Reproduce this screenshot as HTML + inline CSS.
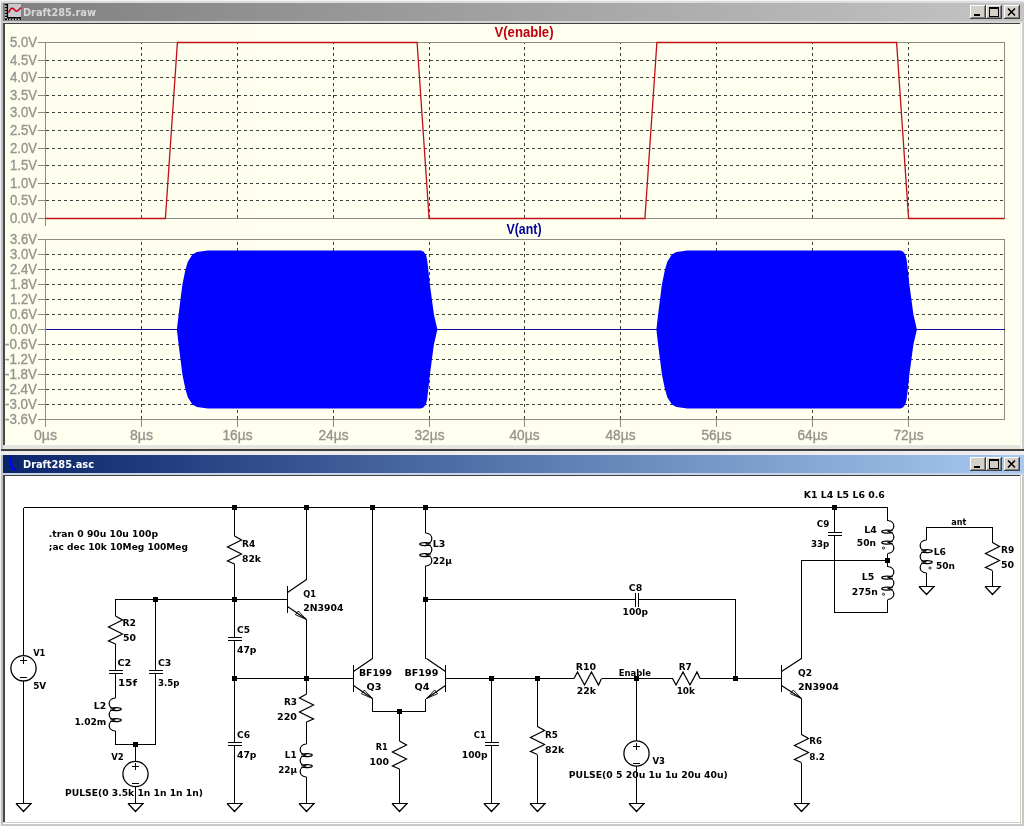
<!DOCTYPE html>
<html lang="en"><head><meta charset="utf-8"><title>Draft285</title>
<style>html,body{margin:0;padding:0;background:#d8d8d4;overflow:hidden}svg{display:block;will-change:transform;opacity:0.999}text{white-space:pre}</style></head>
<body>
<svg width="1024" height="826" viewBox="0 0 1024 826">
<defs>
<linearGradient id="g1" x1="0" x2="1" y1="0" y2="0"><stop offset="0" stop-color="#808080"/><stop offset="1" stop-color="#c4c4c4"/></linearGradient>
<linearGradient id="g2" x1="0" x2="1" y1="0" y2="0"><stop offset="0" stop-color="#0a246a"/><stop offset="1" stop-color="#a6caf0"/></linearGradient>
</defs>
<g shape-rendering="crispEdges">
<rect x="0" y="0" width="1024" height="826" fill="#d8d8d4"/>
<rect x="0" y="0" width="1024" height="1" fill="#f4f4f4"/>
<rect x="0" y="1" width="1024" height="2" fill="#dcdcdc"/>
<rect x="3" y="3" width="1021" height="18" fill="url(#g1)"/>
<rect x="3" y="21" width="1021" height="2" fill="#d4d4d0"/>
<rect x="3" y="23" width="1017" height="1" fill="#404040"/>
<rect x="3" y="23" width="2" height="422" fill="#484848"/>
<rect x="5" y="24" width="1015" height="421" fill="#fffff0"/>
<rect x="3" y="445" width="1018" height="4" fill="#e6e6e0"/>
<rect x="1020" y="23" width="1" height="423" fill="#f0f0f0"/>
<rect x="0" y="449" width="1024" height="2" fill="#404040"/>
<rect x="0" y="451" width="1024" height="4" fill="#ececec"/>
<rect x="3" y="455" width="1021" height="18" fill="url(#g2)"/>
<rect x="3" y="473" width="1021" height="2" fill="#c8d4e8"/>
<rect x="3" y="475" width="1017" height="1" fill="#404040"/>
<rect x="3" y="475" width="2" height="347" fill="#484848"/>
<rect x="5" y="476" width="1014" height="346" fill="#ffffff"/>
<rect x="1019" y="476" width="1" height="346" fill="#ffffff"/>
<rect x="3" y="822" width="1018" height="1" fill="#d0d0c8"/>
<rect x="3" y="823" width="1019" height="1" fill="#ffffff"/>
<rect x="0" y="824" width="1024" height="2" fill="#c8c8c4"/>
<rect x="0" y="0" width="1" height="826" fill="#f0f0f0"/>
<rect x="1" y="3" width="2" height="446" fill="#c0c0c0"/>
<rect x="1" y="455" width="2" height="369" fill="#c0c0c0"/>
<rect x="1021" y="23" width="1" height="426" fill="#ffffff"/>
<rect x="1022" y="23" width="2" height="426" fill="#ccccc4"/>
<rect x="1020" y="475" width="1" height="349" fill="#d0d0c8"/>
<rect x="1021" y="475" width="1" height="349" fill="#ffffff"/>
<rect x="1022" y="475" width="2" height="349" fill="#c8c8c0"/>
<rect x="970" y="5" width="16" height="14" fill="#404040"/>
<rect x="970" y="5" width="15" height="13" fill="#ffffff"/>
<rect x="971" y="6" width="14" height="12" fill="#808080"/>
<rect x="971" y="6" width="13" height="11" fill="#d4d0c8"/>
<rect x="986" y="5" width="16" height="14" fill="#404040"/>
<rect x="986" y="5" width="15" height="13" fill="#ffffff"/>
<rect x="987" y="6" width="14" height="12" fill="#808080"/>
<rect x="987" y="6" width="13" height="11" fill="#d4d0c8"/>
<rect x="1004" y="5" width="16" height="14" fill="#404040"/>
<rect x="1004" y="5" width="15" height="13" fill="#ffffff"/>
<rect x="1005" y="6" width="14" height="12" fill="#808080"/>
<rect x="1005" y="6" width="13" height="11" fill="#d4d0c8"/>
<rect x="974" y="14" width="6" height="2" fill="#000"/>
<rect x="989" y="7" width="9" height="9" fill="none" stroke="#000" stroke-width="1" transform="translate(0.5,0.5)"/>
<rect x="989" y="7" width="10" height="2" fill="#000"/>
</g>
<path d="M1008 8.5 L1015 15.5 M1015 8.5 L1008 15.5" stroke="#000" stroke-width="1.6" fill="none"/>
<g shape-rendering="crispEdges">
<rect x="970" y="457" width="16" height="14" fill="#404040"/>
<rect x="970" y="457" width="15" height="13" fill="#ffffff"/>
<rect x="971" y="458" width="14" height="12" fill="#808080"/>
<rect x="971" y="458" width="13" height="11" fill="#d4d0c8"/>
<rect x="986" y="457" width="16" height="14" fill="#404040"/>
<rect x="986" y="457" width="15" height="13" fill="#ffffff"/>
<rect x="987" y="458" width="14" height="12" fill="#808080"/>
<rect x="987" y="458" width="13" height="11" fill="#d4d0c8"/>
<rect x="1004" y="457" width="16" height="14" fill="#404040"/>
<rect x="1004" y="457" width="15" height="13" fill="#ffffff"/>
<rect x="1005" y="458" width="14" height="12" fill="#808080"/>
<rect x="1005" y="458" width="13" height="11" fill="#d4d0c8"/>
<rect x="974" y="466" width="6" height="2" fill="#000"/>
<rect x="989" y="459" width="9" height="9" fill="none" stroke="#000" stroke-width="1" transform="translate(0.5,0.5)"/>
<rect x="989" y="459" width="10" height="2" fill="#000"/>
</g>
<path d="M1008 460.5 L1015 467.5 M1015 460.5 L1008 467.5" stroke="#000" stroke-width="1.6" fill="none"/>
<g shape-rendering="crispEdges">
</g>
<g>
<rect x="8" y="4" width="13" height="13" fill="#c8c8d0"/>
<rect x="5" y="4" width="2" height="16" fill="#e8e8e8"/>
<rect x="5" y="18.5" width="16" height="1.5" fill="#e8e8e8"/>
<rect x="5" y="4.0" width="2" height="1.4" fill="#000"/>
<rect x="5" y="6.9" width="2" height="1.4" fill="#000"/>
<rect x="5" y="9.8" width="2" height="1.4" fill="#000"/>
<rect x="5" y="12.7" width="2" height="1.4" fill="#000"/>
<rect x="5" y="15.6" width="2" height="1.4" fill="#000"/>
<rect x="5" y="18.5" width="2" height="1.4" fill="#000"/>
<rect x="5.0" y="18.5" width="1.4" height="1.5" fill="#000"/>
<rect x="7.9" y="18.5" width="1.4" height="1.5" fill="#000"/>
<rect x="10.8" y="18.5" width="1.4" height="1.5" fill="#000"/>
<rect x="13.7" y="18.5" width="1.4" height="1.5" fill="#000"/>
<rect x="16.6" y="18.5" width="1.4" height="1.5" fill="#000"/>
<rect x="19.5" y="18.5" width="1.4" height="1.5" fill="#000"/>
<path d="M7.4 4V17.8H21" stroke="#000" stroke-width="1.4" fill="none"/>
<path d="M8.5 12.5L11.3 8.2L13.3 8.4L15.8 11L17.6 11L21 7.4" stroke="#d00018" stroke-width="1.5" fill="none"/>
</g>
<path d="M10.5 457.5L11.3 466L12.5 468.5L16 470" stroke="#0000ff" stroke-width="2.2" fill="none"/>
<text x="23" y="16" style="font-family:'DejaVu Sans Condensed','DejaVu Sans','Liberation Sans',sans-serif;font-weight:bold;font-size:11px" fill="#d8d8d8" textLength="73" lengthAdjust="spacingAndGlyphs">Draft285.raw</text>
<text x="23" y="468" style="font-family:'DejaVu Sans Condensed','DejaVu Sans','Liberation Sans',sans-serif;font-weight:bold;font-size:11px" fill="#ffffff" textLength="71" lengthAdjust="spacingAndGlyphs">Draft285.asc</text>
<g shape-rendering="crispEdges" fill="none">
<path d="M46 60.5H1004" stroke="#404040" stroke-dasharray="3 3"/>
<path d="M46 77.5H1004" stroke="#404040" stroke-dasharray="3 3"/>
<path d="M46 95.5H1004" stroke="#404040" stroke-dasharray="3 3"/>
<path d="M46 112.5H1004" stroke="#404040" stroke-dasharray="3 3"/>
<path d="M46 130.5H1004" stroke="#404040" stroke-dasharray="3 3"/>
<path d="M46 148.5H1004" stroke="#404040" stroke-dasharray="3 3"/>
<path d="M46 165.5H1004" stroke="#404040" stroke-dasharray="3 3"/>
<path d="M46 183.5H1004" stroke="#404040" stroke-dasharray="3 3"/>
<path d="M46 200.5H1004" stroke="#404040" stroke-dasharray="3 3"/>
<path d="M141.5 218V43" stroke="#404040" stroke-dasharray="3 3"/>
<path d="M237.5 218V43" stroke="#404040" stroke-dasharray="3 3"/>
<path d="M333.5 218V43" stroke="#404040" stroke-dasharray="3 3"/>
<path d="M429.5 218V43" stroke="#404040" stroke-dasharray="3 3"/>
<path d="M524.5 218V43" stroke="#404040" stroke-dasharray="3 3"/>
<path d="M620.5 218V43" stroke="#404040" stroke-dasharray="3 3"/>
<path d="M716.5 218V43" stroke="#404040" stroke-dasharray="3 3"/>
<path d="M812.5 218V43" stroke="#404040" stroke-dasharray="3 3"/>
<path d="M908.5 218V43" stroke="#404040" stroke-dasharray="3 3"/>
<path d="M38 42.5H1004.5V218.5H38" stroke="#8c8c84"/>
<path d="M45.5 42V226" stroke="#8c8c84"/>
<path d="M38 60.5H45" stroke="#8c8c84"/>
<path d="M38 77.5H45" stroke="#8c8c84"/>
<path d="M38 95.5H45" stroke="#8c8c84"/>
<path d="M38 112.5H45" stroke="#8c8c84"/>
<path d="M38 130.5H45" stroke="#8c8c84"/>
<path d="M38 148.5H45" stroke="#8c8c84"/>
<path d="M38 165.5H45" stroke="#8c8c84"/>
<path d="M38 183.5H45" stroke="#8c8c84"/>
<path d="M38 200.5H45" stroke="#8c8c84"/>
<path d="M46 254.5H1004" stroke="#404040" stroke-dasharray="3 3"/>
<path d="M46 269.5H1004" stroke="#404040" stroke-dasharray="3 3"/>
<path d="M46 284.5H1004" stroke="#404040" stroke-dasharray="3 3"/>
<path d="M46 299.5H1004" stroke="#404040" stroke-dasharray="3 3"/>
<path d="M46 314.5H1004" stroke="#404040" stroke-dasharray="3 3"/>
<path d="M46 329.5H1004" stroke="#404040" stroke-dasharray="3 3"/>
<path d="M46 344.5H1004" stroke="#404040" stroke-dasharray="3 3"/>
<path d="M46 359.5H1004" stroke="#404040" stroke-dasharray="3 3"/>
<path d="M46 374.5H1004" stroke="#404040" stroke-dasharray="3 3"/>
<path d="M46 389.5H1004" stroke="#404040" stroke-dasharray="3 3"/>
<path d="M46 404.5H1004" stroke="#404040" stroke-dasharray="3 3"/>
<path d="M141.5 419V240" stroke="#404040" stroke-dasharray="3 3"/>
<path d="M237.5 419V240" stroke="#404040" stroke-dasharray="3 3"/>
<path d="M333.5 419V240" stroke="#404040" stroke-dasharray="3 3"/>
<path d="M429.5 419V240" stroke="#404040" stroke-dasharray="3 3"/>
<path d="M524.5 419V240" stroke="#404040" stroke-dasharray="3 3"/>
<path d="M620.5 419V240" stroke="#404040" stroke-dasharray="3 3"/>
<path d="M716.5 419V240" stroke="#404040" stroke-dasharray="3 3"/>
<path d="M812.5 419V240" stroke="#404040" stroke-dasharray="3 3"/>
<path d="M908.5 419V240" stroke="#404040" stroke-dasharray="3 3"/>
<path d="M38 239.5H1004.5V419.5H38" stroke="#8c8c84"/>
<path d="M45.5 239V427" stroke="#8c8c84"/>
<path d="M38 254.5H45" stroke="#8c8c84"/>
<path d="M38 269.5H45" stroke="#8c8c84"/>
<path d="M38 284.5H45" stroke="#8c8c84"/>
<path d="M38 299.5H45" stroke="#8c8c84"/>
<path d="M38 314.5H45" stroke="#8c8c84"/>
<path d="M38 329.5H45" stroke="#8c8c84"/>
<path d="M38 344.5H45" stroke="#8c8c84"/>
<path d="M38 359.5H45" stroke="#8c8c84"/>
<path d="M38 374.5H45" stroke="#8c8c84"/>
<path d="M38 389.5H45" stroke="#8c8c84"/>
<path d="M38 404.5H45" stroke="#8c8c84"/>
<path d="M141.5 420V427" stroke="#8c8c84"/>
<path d="M237.5 420V427" stroke="#8c8c84"/>
<path d="M333.5 420V427" stroke="#8c8c84"/>
<path d="M429.5 420V427" stroke="#8c8c84"/>
<path d="M524.5 420V427" stroke="#8c8c84"/>
<path d="M620.5 420V427" stroke="#8c8c84"/>
<path d="M716.5 420V427" stroke="#8c8c84"/>
<path d="M812.5 420V427" stroke="#8c8c84"/>
<path d="M908.5 420V427" stroke="#8c8c84"/>
</g>
<text x="10" y="46.5" style="font-family:'Liberation Sans',sans-serif;font-size:14px" fill="#94948c" stroke="#94948c" stroke-width="0.35" textLength="27" lengthAdjust="spacingAndGlyphs">5.0V</text>
<text x="10" y="64.5" style="font-family:'Liberation Sans',sans-serif;font-size:14px" fill="#94948c" stroke="#94948c" stroke-width="0.35" textLength="27" lengthAdjust="spacingAndGlyphs">4.5V</text>
<text x="10" y="81.5" style="font-family:'Liberation Sans',sans-serif;font-size:14px" fill="#94948c" stroke="#94948c" stroke-width="0.35" textLength="27" lengthAdjust="spacingAndGlyphs">4.0V</text>
<text x="10" y="99.5" style="font-family:'Liberation Sans',sans-serif;font-size:14px" fill="#94948c" stroke="#94948c" stroke-width="0.35" textLength="27" lengthAdjust="spacingAndGlyphs">3.5V</text>
<text x="10" y="116.5" style="font-family:'Liberation Sans',sans-serif;font-size:14px" fill="#94948c" stroke="#94948c" stroke-width="0.35" textLength="27" lengthAdjust="spacingAndGlyphs">3.0V</text>
<text x="10" y="134.5" style="font-family:'Liberation Sans',sans-serif;font-size:14px" fill="#94948c" stroke="#94948c" stroke-width="0.35" textLength="27" lengthAdjust="spacingAndGlyphs">2.5V</text>
<text x="10" y="152.5" style="font-family:'Liberation Sans',sans-serif;font-size:14px" fill="#94948c" stroke="#94948c" stroke-width="0.35" textLength="27" lengthAdjust="spacingAndGlyphs">2.0V</text>
<text x="10" y="169.5" style="font-family:'Liberation Sans',sans-serif;font-size:14px" fill="#94948c" stroke="#94948c" stroke-width="0.35" textLength="27" lengthAdjust="spacingAndGlyphs">1.5V</text>
<text x="10" y="187.5" style="font-family:'Liberation Sans',sans-serif;font-size:14px" fill="#94948c" stroke="#94948c" stroke-width="0.35" textLength="27" lengthAdjust="spacingAndGlyphs">1.0V</text>
<text x="10" y="204.5" style="font-family:'Liberation Sans',sans-serif;font-size:14px" fill="#94948c" stroke="#94948c" stroke-width="0.35" textLength="27" lengthAdjust="spacingAndGlyphs">0.5V</text>
<text x="10" y="222.5" style="font-family:'Liberation Sans',sans-serif;font-size:14px" fill="#94948c" stroke="#94948c" stroke-width="0.35" textLength="27" lengthAdjust="spacingAndGlyphs">0.0V</text>
<text x="10" y="243.5" style="font-family:'Liberation Sans',sans-serif;font-size:14px" fill="#94948c" stroke="#94948c" stroke-width="0.35" textLength="27" lengthAdjust="spacingAndGlyphs">3.6V</text>
<text x="10" y="258.5" style="font-family:'Liberation Sans',sans-serif;font-size:14px" fill="#94948c" stroke="#94948c" stroke-width="0.35" textLength="27" lengthAdjust="spacingAndGlyphs">3.0V</text>
<text x="10" y="273.5" style="font-family:'Liberation Sans',sans-serif;font-size:14px" fill="#94948c" stroke="#94948c" stroke-width="0.35" textLength="27" lengthAdjust="spacingAndGlyphs">2.4V</text>
<text x="10" y="288.5" style="font-family:'Liberation Sans',sans-serif;font-size:14px" fill="#94948c" stroke="#94948c" stroke-width="0.35" textLength="27" lengthAdjust="spacingAndGlyphs">1.8V</text>
<text x="10" y="303.5" style="font-family:'Liberation Sans',sans-serif;font-size:14px" fill="#94948c" stroke="#94948c" stroke-width="0.35" textLength="27" lengthAdjust="spacingAndGlyphs">1.2V</text>
<text x="10" y="318.5" style="font-family:'Liberation Sans',sans-serif;font-size:14px" fill="#94948c" stroke="#94948c" stroke-width="0.35" textLength="27" lengthAdjust="spacingAndGlyphs">0.6V</text>
<text x="10" y="333.5" style="font-family:'Liberation Sans',sans-serif;font-size:14px" fill="#94948c" stroke="#94948c" stroke-width="0.35" textLength="27" lengthAdjust="spacingAndGlyphs">0.0V</text>
<text x="5" y="348.5" style="font-family:'Liberation Sans',sans-serif;font-size:14px" fill="#94948c" stroke="#94948c" stroke-width="0.35" textLength="32" lengthAdjust="spacingAndGlyphs">-0.6V</text>
<text x="5" y="363.5" style="font-family:'Liberation Sans',sans-serif;font-size:14px" fill="#94948c" stroke="#94948c" stroke-width="0.35" textLength="32" lengthAdjust="spacingAndGlyphs">-1.2V</text>
<text x="5" y="378.5" style="font-family:'Liberation Sans',sans-serif;font-size:14px" fill="#94948c" stroke="#94948c" stroke-width="0.35" textLength="32" lengthAdjust="spacingAndGlyphs">-1.8V</text>
<text x="5" y="393.5" style="font-family:'Liberation Sans',sans-serif;font-size:14px" fill="#94948c" stroke="#94948c" stroke-width="0.35" textLength="32" lengthAdjust="spacingAndGlyphs">-2.4V</text>
<text x="5" y="408.5" style="font-family:'Liberation Sans',sans-serif;font-size:14px" fill="#94948c" stroke="#94948c" stroke-width="0.35" textLength="32" lengthAdjust="spacingAndGlyphs">-3.0V</text>
<text x="5" y="423.5" style="font-family:'Liberation Sans',sans-serif;font-size:14px" fill="#94948c" stroke="#94948c" stroke-width="0.35" textLength="32" lengthAdjust="spacingAndGlyphs">-3.6V</text>
<text x="34.0" y="440" style="font-family:'Liberation Sans',sans-serif;font-size:14px" fill="#94948c" stroke="#94948c" stroke-width="0.35" textLength="23" lengthAdjust="spacingAndGlyphs">0µs</text>
<text x="130.0" y="440" style="font-family:'Liberation Sans',sans-serif;font-size:14px" fill="#94948c" stroke="#94948c" stroke-width="0.35" textLength="23" lengthAdjust="spacingAndGlyphs">8µs</text>
<text x="222.5" y="440" style="font-family:'Liberation Sans',sans-serif;font-size:14px" fill="#94948c" stroke="#94948c" stroke-width="0.35" textLength="30" lengthAdjust="spacingAndGlyphs">16µs</text>
<text x="318.5" y="440" style="font-family:'Liberation Sans',sans-serif;font-size:14px" fill="#94948c" stroke="#94948c" stroke-width="0.35" textLength="30" lengthAdjust="spacingAndGlyphs">24µs</text>
<text x="414.5" y="440" style="font-family:'Liberation Sans',sans-serif;font-size:14px" fill="#94948c" stroke="#94948c" stroke-width="0.35" textLength="30" lengthAdjust="spacingAndGlyphs">32µs</text>
<text x="509.5" y="440" style="font-family:'Liberation Sans',sans-serif;font-size:14px" fill="#94948c" stroke="#94948c" stroke-width="0.35" textLength="30" lengthAdjust="spacingAndGlyphs">40µs</text>
<text x="605.5" y="440" style="font-family:'Liberation Sans',sans-serif;font-size:14px" fill="#94948c" stroke="#94948c" stroke-width="0.35" textLength="30" lengthAdjust="spacingAndGlyphs">48µs</text>
<text x="701.5" y="440" style="font-family:'Liberation Sans',sans-serif;font-size:14px" fill="#94948c" stroke="#94948c" stroke-width="0.35" textLength="30" lengthAdjust="spacingAndGlyphs">56µs</text>
<text x="797.5" y="440" style="font-family:'Liberation Sans',sans-serif;font-size:14px" fill="#94948c" stroke="#94948c" stroke-width="0.35" textLength="30" lengthAdjust="spacingAndGlyphs">64µs</text>
<text x="893.5" y="440" style="font-family:'Liberation Sans',sans-serif;font-size:14px" fill="#94948c" stroke="#94948c" stroke-width="0.35" textLength="30" lengthAdjust="spacingAndGlyphs">72µs</text>
<text x="494.5" y="37" style="font-family:'Liberation Sans',sans-serif;font-weight:bold;font-size:14px" fill="#c00010" textLength="59" lengthAdjust="spacingAndGlyphs">V(enable)</text>
<text x="506.5" y="234" style="font-family:'Liberation Sans',sans-serif;font-weight:bold;font-size:14px" fill="#0000a0" textLength="35" lengthAdjust="spacingAndGlyphs">V(ant)</text>
<path d="M45.5 218.5H165.4L177.4 42.5H417.1L429.1 218.5H644.9L656.9 42.5H896.6L908.6 218.5H1004.5" stroke="#c01018" stroke-width="1.3" fill="none"/>
<path d="M45.5 329.5H1004.5" stroke="#1010a0" stroke-width="1.2" fill="none" shape-rendering="crispEdges"/>
<path d="M176.9 329.5L178.6 314.5L180.5 299.5L182.4 284.5L185.5 269.5L187.9 261.5L192.4 254.5L196.9 252.0L207.9 250.5L420.8 250.5L423.4 251.5L425.8 254.5L427.1 259.5L428.3 269.5L429.9 284.5L431.9 299.5L433.9 314.5L437.4 329.5L437.4 329.5L433.9 344.5L431.9 359.5L429.9 374.5L428.3 389.5L427.1 399.5L425.8 404.5L423.4 407.5L420.8 408.5L207.9 408.5L196.9 407.0L192.4 404.5L187.9 397.5L185.5 389.5L182.4 374.5L180.5 359.5L178.6 344.5L176.9 329.5Z" fill="#0000ff"/>
<path d="M656.4 329.5L658.1 314.5L660.0 299.5L661.9 284.5L665.0 269.5L667.4 261.5L671.9 254.5L676.4 252.0L687.4 250.5L900.3 250.5L902.9 251.5L905.3 254.5L906.6 259.5L907.8 269.5L909.4 284.5L911.4 299.5L913.4 314.5L916.9 329.5L916.9 329.5L913.4 344.5L911.4 359.5L909.4 374.5L907.8 389.5L906.6 399.5L905.3 404.5L902.9 407.5L900.3 408.5L687.4 408.5L676.4 407.0L671.9 404.5L667.4 397.5L665.0 389.5L661.9 374.5L660.0 359.5L658.1 344.5L656.4 329.5Z" fill="#0000ff"/>
<g id="sch">
<path d="M23.5 507.5L887.5 507.5M23.5 507.5L23.5 655.5M20.0 660.8H27.0M23.5 657.3V664.3M20.0 677.8H27.0M23.5 681L23.5 803.5M15.5 803.5H31.5M115.5 616L115.5 599.5L288 599.5M115.5 644L115.5 670.5M108.5 670.5H122.5M108.5 673.5H122.5M115.5 673.5L115.5 698M115.5 731L115.5 744.5L155.5 744.5L155.5 673.5M155.5 599.5L155.5 670.5M148.5 670.5H162.5M148.5 673.5H162.5M135.5 744.5L135.5 761.5M132.0 766.5H139.0M135.5 763V770M132.0 783.5H139.0M135.5 786.5L135.5 803.5M127.5 803.5H143.5M234.5 507.5L234.5 536M234.5 564L234.5 637.5M227.5 637.5H241.5M227.5 640.5H241.5M234.5 640.5L234.5 742.5M227.5 742.5H241.5M227.5 745.5H241.5M234.5 745.5L234.5 803.5M226.5 803.5H242.5M234.5 678.5L353.5 678.5M287.5 586.0V613.0M306.5 507.5L306.5 579.5M306.5 619.5L306.5 694M306.5 722L306.5 744M306.5 777L306.5 803.5M298.5 803.5H314.5M353.5 665.0V692.0M445.5 665.0V692.0M372.5 507.5L372.5 658.5M372.5 698.5L372.5 711.5L425.5 711.5L425.5 698.5M399.5 711.5L399.5 741M399.5 769L399.5 803.5M391.5 803.5H407.5M425.5 507.5L425.5 533M425.5 566L425.5 658.5M425.5 599.5L635.5 599.5M635.5 593V607M638.5 593V607M638.5 599.5L735.5 599.5L735.5 678.5M445.5 678.5L574 678.5M491.5 678.5L491.5 742.5M484.5 742.5H498.5M484.5 745.5H498.5M491.5 745.5L491.5 803.5M483.5 803.5H499.5M537.5 678.5L537.5 726.5M537.5 754.5L537.5 803.5M529.5 803.5H545.5M601.5 678.5L672.5 678.5M700 678.5L781.5 678.5M636.5 678.5L636.5 741M633.0 746.0H640.0M636.5 742.5V749.5M633.0 763.0H640.0M636.5 766L636.5 803.5M628.5 803.5H644.5M781.5 665.0V692.0M801.5 658.5L801.5 560.5L887.5 560.5M801.5 698.5L801.5 734.5M801.5 762.5L801.5 803.5M793.5 803.5H809.5M834.5 507.5L834.5 532.5M827.5 532.5H841.5M827.5 535.5H841.5M834.5 535.5L834.5 612.5L887.5 612.5L887.5 599.5M887.5 507.5L887.5 520.5M887.5 553.5L887.5 566.5M926.5 540L926.5 527.5L992.5 527.5L992.5 542.5M926.5 573L926.5 586.5M918.5 586.5H934.5M992.5 570.5L992.5 586.5M984.5 586.5H1000.5" stroke="#000" fill="none" stroke-width="1" shape-rendering="crispEdges"/>
<path d="M16.0 803.5L23.5 811.5L31.0 803.5M115.5 616L122.5 620L108.5 627L122.5 634L108.5 641L115.5 644M115.5 698C107.05 698.5 107.05 708.5 115.5 709.0C107.05 709.5 107.05 719.5 115.5 720.0C107.05 720.5 107.05 730.5 115.5 731.0M110.3 710.2C117.45 711.2 122.0 710.2 121.025 708.7C120.05 707.2 113.55 707.4 110.3 708.2M110.3 721.2C117.45 722.2 122.0 721.2 121.025 719.7C120.05 718.2 113.55 718.4 110.3 719.2M128.0 803.5L135.5 811.5L143.0 803.5M234.5 536L241.5 540L227.5 547L241.5 554L227.5 561L234.5 564M227.0 803.5L234.5 811.5L242.0 803.5M287.5 592.5L306.5 579.5M287.5 606.5L306.5 619.5M306.5 694L299.5 698L313.5 705L299.5 712L313.5 719L306.5 722M306.5 744C298.05 744.5 298.05 754.5 306.5 755.0C298.05 755.5 298.05 765.5 306.5 766.0C298.05 766.5 298.05 776.5 306.5 777.0M301.3 756.2C308.45 757.2 313.0 756.2 312.025 754.7C311.05 753.2 304.55 753.4 301.3 754.2M301.3 767.2C308.45 768.2 313.0 767.2 312.025 765.7C311.05 764.2 304.55 764.4 301.3 765.2M299.0 803.5L306.5 811.5L314.0 803.5M353.5 671.5L372.5 658.5M353.5 685.5L372.5 698.5M445.5 671.5L426.5 658.5M445.5 685.5L426.5 698.5M399.5 741L406.5 745L392.5 752L406.5 759L392.5 766L399.5 769M392.0 803.5L399.5 811.5L407.0 803.5M425.5 533C433.95 533.5 433.95 543.5 425.5 544.0C433.95 544.5 433.95 554.5 425.5 555.0C433.95 555.5 433.95 565.5 425.5 566.0M430.7 545.2C423.55 546.2 419.0 545.2 419.975 543.7C420.95 542.2 427.45 542.4 430.7 543.2M430.7 556.2C423.55 557.2 419.0 556.2 419.975 554.7C420.95 553.2 427.45 553.4 430.7 554.2M484.0 803.5L491.5 811.5L499.0 803.5M537.5 726.5L544.5 730.5L530.5 737.5L544.5 744.5L530.5 751.5L537.5 754.5M530.0 803.5L537.5 811.5L545.0 803.5M574 678.5L577.5 672.0L584.5 685.0L591.5 672.0L598.5 685.0L601.5 678.5M672.5 678.5L676.0 685.0L683.0 672.0L690.0 685.0L697.0 672.0L700.0 678.5M629.0 803.5L636.5 811.5L644.0 803.5M781.5 671.5L801.5 658.5M781.5 685.5L801.5 698.5M801.5 734.5L808.5 738.5L794.5 745.5L808.5 752.5L794.5 759.5L801.5 762.5M794.0 803.5L801.5 811.5L809.0 803.5M887.5 520.5C895.95 521.0 895.95 531.0 887.5 531.5C895.95 532.0 895.95 542.0 887.5 542.5C895.95 543.0 895.95 553.0 887.5 553.5M892.7 532.7C885.55 533.7 881.0 532.7 881.975 531.2C882.95 529.7 889.45 529.9 892.7 530.7M892.7 543.7C885.55 544.7 881.0 543.7 881.975 542.2C882.95 540.7 889.45 540.9 892.7 541.7M887.5 566.5C895.95 567.0 895.95 577.0 887.5 577.5C895.95 578.0 895.95 588.0 887.5 588.5C895.95 589.0 895.95 599.0 887.5 599.5M892.7 578.7C885.55 579.7 881.0 578.7 881.975 577.2C882.95 575.7 889.45 575.9 892.7 576.7M892.7 589.7C885.55 590.7 881.0 589.7 881.975 588.2C882.95 586.7 889.45 586.9 892.7 587.7M926.5 540C918.05 540.5 918.05 550.5 926.5 551.0C918.05 551.5 918.05 561.5 926.5 562.0C918.05 562.5 918.05 572.5 926.5 573.0M921.3 552.2C928.45 553.2 933.0 552.2 932.025 550.7C931.05 549.2 924.55 549.4 921.3 550.2M921.3 563.2C928.45 564.2 933.0 563.2 932.025 561.7C931.05 560.2 924.55 560.4 921.3 561.2M919.0 586.5L926.5 594.5L934.0 586.5M992.5 542.5L999.5 546.5L985.5 553.5L999.5 560.5L985.5 567.5L992.5 570.5M985.0 586.5L992.5 594.5L1000.0 586.5" stroke="#000" fill="none" stroke-width="1.25"/>
<path d="M306.5 619.5L298.3 611.0L295.4 614.7ZM372.5 698.5L364.3 690.0L361.4 693.7ZM426.5 698.5L434.7 690.0L437.6 693.7ZM801.5 698.5L793.3 690.0L790.4 693.7Z" stroke="#000" fill="none" stroke-width="0.9"/>
<circle cx="23.5" cy="668.3" r="12.6" stroke="#000" fill="none" stroke-width="1.3"/>
<circle cx="135.5" cy="774" r="12.6" stroke="#000" fill="none" stroke-width="1.3"/>
<circle cx="636.5" cy="753.5" r="12.6" stroke="#000" fill="none" stroke-width="1.3"/>
<circle cx="883.5" cy="548" r="1.1" stroke="#000" fill="none" stroke-width="0.8"/>
<circle cx="883.5" cy="594.3" r="1.1" stroke="#000" fill="none" stroke-width="0.8"/>
<circle cx="930" cy="568" r="1.1" stroke="#000" fill="none" stroke-width="0.8"/>
<rect x="153.0" y="597.0" width="5" height="5" fill="#000" shape-rendering="crispEdges"/>
<rect x="232.0" y="597.0" width="5" height="5" fill="#000" shape-rendering="crispEdges"/>
<rect x="133.0" y="742.0" width="5" height="5" fill="#000" shape-rendering="crispEdges"/>
<rect x="232.0" y="505.0" width="5" height="5" fill="#000" shape-rendering="crispEdges"/>
<rect x="232.0" y="676.0" width="5" height="5" fill="#000" shape-rendering="crispEdges"/>
<rect x="304.0" y="676.0" width="5" height="5" fill="#000" shape-rendering="crispEdges"/>
<rect x="304.0" y="505.0" width="5" height="5" fill="#000" shape-rendering="crispEdges"/>
<rect x="370.0" y="505.0" width="5" height="5" fill="#000" shape-rendering="crispEdges"/>
<rect x="423.0" y="505.0" width="5" height="5" fill="#000" shape-rendering="crispEdges"/>
<rect x="397.0" y="709.0" width="5" height="5" fill="#000" shape-rendering="crispEdges"/>
<rect x="423.0" y="597.0" width="5" height="5" fill="#000" shape-rendering="crispEdges"/>
<rect x="489.0" y="676.0" width="5" height="5" fill="#000" shape-rendering="crispEdges"/>
<rect x="535.0" y="676.0" width="5" height="5" fill="#000" shape-rendering="crispEdges"/>
<rect x="634.0" y="676.0" width="5" height="5" fill="#000" shape-rendering="crispEdges"/>
<rect x="733.0" y="676.0" width="5" height="5" fill="#000" shape-rendering="crispEdges"/>
<rect x="832.0" y="505.0" width="5" height="5" fill="#000" shape-rendering="crispEdges"/>
<rect x="885.0" y="558.0" width="5" height="5" fill="#000" shape-rendering="crispEdges"/>
<text x="48.8" y="537" style="font-family:'DejaVu Sans Condensed','DejaVu Sans','Liberation Sans',sans-serif;font-weight:bold;font-size:9.4px" fill="#000" textLength="109.2" lengthAdjust="spacingAndGlyphs">.tran 0 90u 10u 100p</text>
<text x="48.8" y="550" style="font-family:'DejaVu Sans Condensed','DejaVu Sans','Liberation Sans',sans-serif;font-weight:bold;font-size:9.4px" fill="#000" textLength="139.2" lengthAdjust="spacingAndGlyphs">;ac dec 10k 10Meg 100Meg</text>
<text x="33.2" y="655.8" style="font-family:'DejaVu Sans Condensed','DejaVu Sans','Liberation Sans',sans-serif;font-weight:bold;font-size:9.4px" fill="#000" textLength="12.2" lengthAdjust="spacingAndGlyphs">V1</text>
<text x="33.2" y="688.8" style="font-family:'DejaVu Sans Condensed','DejaVu Sans','Liberation Sans',sans-serif;font-weight:bold;font-size:9.4px" fill="#000" textLength="13" lengthAdjust="spacingAndGlyphs">5V</text>
<text x="122.5" y="625.5" style="font-family:'DejaVu Sans Condensed','DejaVu Sans','Liberation Sans',sans-serif;font-weight:bold;font-size:9.4px" fill="#000" textLength="13.5" lengthAdjust="spacingAndGlyphs">R2</text>
<text x="123" y="640.5" style="font-family:'DejaVu Sans Condensed','DejaVu Sans','Liberation Sans',sans-serif;font-weight:bold;font-size:9.4px" fill="#000" textLength="13" lengthAdjust="spacingAndGlyphs">50</text>
<text x="117.5" y="666" style="font-family:'DejaVu Sans Condensed','DejaVu Sans','Liberation Sans',sans-serif;font-weight:bold;font-size:9.4px" fill="#000" textLength="13.7" lengthAdjust="spacingAndGlyphs">C2</text>
<text x="118" y="685.5" style="font-family:'DejaVu Sans Condensed','DejaVu Sans','Liberation Sans',sans-serif;font-weight:bold;font-size:9.4px" fill="#000" textLength="19" lengthAdjust="spacingAndGlyphs">15f</text>
<text x="158" y="666" style="font-family:'DejaVu Sans Condensed','DejaVu Sans','Liberation Sans',sans-serif;font-weight:bold;font-size:9.4px" fill="#000" textLength="13.3" lengthAdjust="spacingAndGlyphs">C3</text>
<text x="158" y="685.5" style="font-family:'DejaVu Sans Condensed','DejaVu Sans','Liberation Sans',sans-serif;font-weight:bold;font-size:9.4px" fill="#000" textLength="21.5" lengthAdjust="spacingAndGlyphs">3.5p</text>
<text x="93.8" y="708.8" style="font-family:'DejaVu Sans Condensed','DejaVu Sans','Liberation Sans',sans-serif;font-weight:bold;font-size:9.4px" fill="#000" textLength="12.5" lengthAdjust="spacingAndGlyphs">L2</text>
<text x="74.5" y="724.5" style="font-family:'DejaVu Sans Condensed','DejaVu Sans','Liberation Sans',sans-serif;font-weight:bold;font-size:9.4px" fill="#000" textLength="31.8" lengthAdjust="spacingAndGlyphs">1.02m</text>
<text x="111.2" y="760" style="font-family:'DejaVu Sans Condensed','DejaVu Sans','Liberation Sans',sans-serif;font-weight:bold;font-size:9.4px" fill="#000" textLength="12.5" lengthAdjust="spacingAndGlyphs">V2</text>
<text x="65" y="796" style="font-family:'DejaVu Sans Condensed','DejaVu Sans','Liberation Sans',sans-serif;font-weight:bold;font-size:9.4px" fill="#000" textLength="138" lengthAdjust="spacingAndGlyphs">PULSE(0 3.5k 1n 1n 1n 1n)</text>
<text x="242" y="546.8" style="font-family:'DejaVu Sans Condensed','DejaVu Sans','Liberation Sans',sans-serif;font-weight:bold;font-size:9.4px" fill="#000" textLength="13.2" lengthAdjust="spacingAndGlyphs">R4</text>
<text x="242" y="561.8" style="font-family:'DejaVu Sans Condensed','DejaVu Sans','Liberation Sans',sans-serif;font-weight:bold;font-size:9.4px" fill="#000" textLength="19" lengthAdjust="spacingAndGlyphs">82k</text>
<text x="237" y="632.8" style="font-family:'DejaVu Sans Condensed','DejaVu Sans','Liberation Sans',sans-serif;font-weight:bold;font-size:9.4px" fill="#000" textLength="13" lengthAdjust="spacingAndGlyphs">C5</text>
<text x="237" y="652.8" style="font-family:'DejaVu Sans Condensed','DejaVu Sans','Liberation Sans',sans-serif;font-weight:bold;font-size:9.4px" fill="#000" textLength="19.5" lengthAdjust="spacingAndGlyphs">47p</text>
<text x="237" y="737.5" style="font-family:'DejaVu Sans Condensed','DejaVu Sans','Liberation Sans',sans-serif;font-weight:bold;font-size:9.4px" fill="#000" textLength="13" lengthAdjust="spacingAndGlyphs">C6</text>
<text x="237" y="757.5" style="font-family:'DejaVu Sans Condensed','DejaVu Sans','Liberation Sans',sans-serif;font-weight:bold;font-size:9.4px" fill="#000" textLength="19.5" lengthAdjust="spacingAndGlyphs">47p</text>
<text x="303.3" y="596.8" style="font-family:'DejaVu Sans Condensed','DejaVu Sans','Liberation Sans',sans-serif;font-weight:bold;font-size:9.4px" fill="#000" textLength="12.8" lengthAdjust="spacingAndGlyphs">Q1</text>
<text x="303.3" y="610.5" style="font-family:'DejaVu Sans Condensed','DejaVu Sans','Liberation Sans',sans-serif;font-weight:bold;font-size:9.4px" fill="#000" textLength="40.2" lengthAdjust="spacingAndGlyphs">2N3904</text>
<text x="284" y="705" style="font-family:'DejaVu Sans Condensed','DejaVu Sans','Liberation Sans',sans-serif;font-weight:bold;font-size:9.4px" fill="#000" textLength="13" lengthAdjust="spacingAndGlyphs">R3</text>
<text x="277" y="720" style="font-family:'DejaVu Sans Condensed','DejaVu Sans','Liberation Sans',sans-serif;font-weight:bold;font-size:9.4px" fill="#000" textLength="20" lengthAdjust="spacingAndGlyphs">220</text>
<text x="284.8" y="758" style="font-family:'DejaVu Sans Condensed','DejaVu Sans','Liberation Sans',sans-serif;font-weight:bold;font-size:9.4px" fill="#000" textLength="11.8" lengthAdjust="spacingAndGlyphs">L1</text>
<text x="278.2" y="773.3" style="font-family:'DejaVu Sans Condensed','DejaVu Sans','Liberation Sans',sans-serif;font-weight:bold;font-size:9.4px" fill="#000" textLength="18.8" lengthAdjust="spacingAndGlyphs">22µ</text>
<text x="359" y="675.5" style="font-family:'DejaVu Sans Condensed','DejaVu Sans','Liberation Sans',sans-serif;font-weight:bold;font-size:9.4px" fill="#000" textLength="33" lengthAdjust="spacingAndGlyphs">BF199</text>
<text x="404.5" y="675.5" style="font-family:'DejaVu Sans Condensed','DejaVu Sans','Liberation Sans',sans-serif;font-weight:bold;font-size:9.4px" fill="#000" textLength="33.8" lengthAdjust="spacingAndGlyphs">BF199</text>
<text x="366.5" y="690" style="font-family:'DejaVu Sans Condensed','DejaVu Sans','Liberation Sans',sans-serif;font-weight:bold;font-size:9.4px" fill="#000" textLength="15" lengthAdjust="spacingAndGlyphs">Q3</text>
<text x="414.5" y="690" style="font-family:'DejaVu Sans Condensed','DejaVu Sans','Liberation Sans',sans-serif;font-weight:bold;font-size:9.4px" fill="#000" textLength="15" lengthAdjust="spacingAndGlyphs">Q4</text>
<text x="375.8" y="750" style="font-family:'DejaVu Sans Condensed','DejaVu Sans','Liberation Sans',sans-serif;font-weight:bold;font-size:9.4px" fill="#000" textLength="12" lengthAdjust="spacingAndGlyphs">R1</text>
<text x="369.5" y="765" style="font-family:'DejaVu Sans Condensed','DejaVu Sans','Liberation Sans',sans-serif;font-weight:bold;font-size:9.4px" fill="#000" textLength="19.5" lengthAdjust="spacingAndGlyphs">100</text>
<text x="432.8" y="546.8" style="font-family:'DejaVu Sans Condensed','DejaVu Sans','Liberation Sans',sans-serif;font-weight:bold;font-size:9.4px" fill="#000" textLength="12.5" lengthAdjust="spacingAndGlyphs">L3</text>
<text x="432.8" y="564" style="font-family:'DejaVu Sans Condensed','DejaVu Sans','Liberation Sans',sans-serif;font-weight:bold;font-size:9.4px" fill="#000" textLength="19.2" lengthAdjust="spacingAndGlyphs">22µ</text>
<text x="473.8" y="737.5" style="font-family:'DejaVu Sans Condensed','DejaVu Sans','Liberation Sans',sans-serif;font-weight:bold;font-size:9.4px" fill="#000" textLength="12.2" lengthAdjust="spacingAndGlyphs">C1</text>
<text x="461.8" y="757.5" style="font-family:'DejaVu Sans Condensed','DejaVu Sans','Liberation Sans',sans-serif;font-weight:bold;font-size:9.4px" fill="#000" textLength="25.8" lengthAdjust="spacingAndGlyphs">100p</text>
<text x="545" y="737.5" style="font-family:'DejaVu Sans Condensed','DejaVu Sans','Liberation Sans',sans-serif;font-weight:bold;font-size:9.4px" fill="#000" textLength="13" lengthAdjust="spacingAndGlyphs">R5</text>
<text x="545" y="752.5" style="font-family:'DejaVu Sans Condensed','DejaVu Sans','Liberation Sans',sans-serif;font-weight:bold;font-size:9.4px" fill="#000" textLength="19.3" lengthAdjust="spacingAndGlyphs">82k</text>
<text x="575.7" y="669.5" style="font-family:'DejaVu Sans Condensed','DejaVu Sans','Liberation Sans',sans-serif;font-weight:bold;font-size:9.4px" fill="#000" textLength="20.5" lengthAdjust="spacingAndGlyphs">R10</text>
<text x="576.8" y="693.6" style="font-family:'DejaVu Sans Condensed','DejaVu Sans','Liberation Sans',sans-serif;font-weight:bold;font-size:9.4px" fill="#000" textLength="19.1" lengthAdjust="spacingAndGlyphs">22k</text>
<text x="618.7" y="675.5" style="font-family:'DejaVu Sans Condensed','DejaVu Sans','Liberation Sans',sans-serif;font-weight:bold;font-size:9.4px" fill="#000" textLength="32.3" lengthAdjust="spacingAndGlyphs">Enable</text>
<text x="628.8" y="590.5" style="font-family:'DejaVu Sans Condensed','DejaVu Sans','Liberation Sans',sans-serif;font-weight:bold;font-size:9.4px" fill="#000" textLength="13.5" lengthAdjust="spacingAndGlyphs">C8</text>
<text x="622.6" y="614.5" style="font-family:'DejaVu Sans Condensed','DejaVu Sans','Liberation Sans',sans-serif;font-weight:bold;font-size:9.4px" fill="#000" textLength="25.4" lengthAdjust="spacingAndGlyphs">100p</text>
<text x="678.8" y="669.8" style="font-family:'DejaVu Sans Condensed','DejaVu Sans','Liberation Sans',sans-serif;font-weight:bold;font-size:9.4px" fill="#000" textLength="13" lengthAdjust="spacingAndGlyphs">R7</text>
<text x="676.7" y="693.5" style="font-family:'DejaVu Sans Condensed','DejaVu Sans','Liberation Sans',sans-serif;font-weight:bold;font-size:9.4px" fill="#000" textLength="18.3" lengthAdjust="spacingAndGlyphs">10k</text>
<text x="652.5" y="763.8" style="font-family:'DejaVu Sans Condensed','DejaVu Sans','Liberation Sans',sans-serif;font-weight:bold;font-size:9.4px" fill="#000" textLength="12.5" lengthAdjust="spacingAndGlyphs">V3</text>
<text x="568.8" y="777.5" style="font-family:'DejaVu Sans Condensed','DejaVu Sans','Liberation Sans',sans-serif;font-weight:bold;font-size:9.4px" fill="#000" textLength="159" lengthAdjust="spacingAndGlyphs">PULSE(0 5 20u 1u 1u 20u 40u)</text>
<text x="798" y="675.8" style="font-family:'DejaVu Sans Condensed','DejaVu Sans','Liberation Sans',sans-serif;font-weight:bold;font-size:9.4px" fill="#000" textLength="14" lengthAdjust="spacingAndGlyphs">Q2</text>
<text x="798" y="689.5" style="font-family:'DejaVu Sans Condensed','DejaVu Sans','Liberation Sans',sans-serif;font-weight:bold;font-size:9.4px" fill="#000" textLength="40.8" lengthAdjust="spacingAndGlyphs">2N3904</text>
<text x="809.3" y="744.3" style="font-family:'DejaVu Sans Condensed','DejaVu Sans','Liberation Sans',sans-serif;font-weight:bold;font-size:9.4px" fill="#000" textLength="12.7" lengthAdjust="spacingAndGlyphs">R6</text>
<text x="809.3" y="759.5" style="font-family:'DejaVu Sans Condensed','DejaVu Sans','Liberation Sans',sans-serif;font-weight:bold;font-size:9.4px" fill="#000" textLength="15.7" lengthAdjust="spacingAndGlyphs">8.2</text>
<text x="803.8" y="497.8" style="font-family:'DejaVu Sans Condensed','DejaVu Sans','Liberation Sans',sans-serif;font-weight:bold;font-size:9.4px" fill="#000" textLength="81" lengthAdjust="spacingAndGlyphs">K1 L4 L5 L6 0.6</text>
<text x="816.8" y="526.5" style="font-family:'DejaVu Sans Condensed','DejaVu Sans','Liberation Sans',sans-serif;font-weight:bold;font-size:9.4px" fill="#000" textLength="12.5" lengthAdjust="spacingAndGlyphs">C9</text>
<text x="811" y="546.5" style="font-family:'DejaVu Sans Condensed','DejaVu Sans','Liberation Sans',sans-serif;font-weight:bold;font-size:9.4px" fill="#000" textLength="18.3" lengthAdjust="spacingAndGlyphs">33p</text>
<text x="864.3" y="532.8" style="font-family:'DejaVu Sans Condensed','DejaVu Sans','Liberation Sans',sans-serif;font-weight:bold;font-size:9.4px" fill="#000" textLength="12.5" lengthAdjust="spacingAndGlyphs">L4</text>
<text x="856.8" y="546" style="font-family:'DejaVu Sans Condensed','DejaVu Sans','Liberation Sans',sans-serif;font-weight:bold;font-size:9.4px" fill="#000" textLength="19.2" lengthAdjust="spacingAndGlyphs">50n</text>
<text x="861.8" y="579.8" style="font-family:'DejaVu Sans Condensed','DejaVu Sans','Liberation Sans',sans-serif;font-weight:bold;font-size:9.4px" fill="#000" textLength="12.5" lengthAdjust="spacingAndGlyphs">L5</text>
<text x="851.8" y="594.6" style="font-family:'DejaVu Sans Condensed','DejaVu Sans','Liberation Sans',sans-serif;font-weight:bold;font-size:9.4px" fill="#000" textLength="26" lengthAdjust="spacingAndGlyphs">275n</text>
<text x="951.3" y="525.2" style="font-family:'DejaVu Sans Condensed','DejaVu Sans','Liberation Sans',sans-serif;font-weight:bold;font-size:9.4px" fill="#000" textLength="15" lengthAdjust="spacingAndGlyphs">ant</text>
<text x="933.8" y="554.8" style="font-family:'DejaVu Sans Condensed','DejaVu Sans','Liberation Sans',sans-serif;font-weight:bold;font-size:9.4px" fill="#000" textLength="12.2" lengthAdjust="spacingAndGlyphs">L6</text>
<text x="936" y="568.5" style="font-family:'DejaVu Sans Condensed','DejaVu Sans','Liberation Sans',sans-serif;font-weight:bold;font-size:9.4px" fill="#000" textLength="19" lengthAdjust="spacingAndGlyphs">50n</text>
<text x="1001" y="553" style="font-family:'DejaVu Sans Condensed','DejaVu Sans','Liberation Sans',sans-serif;font-weight:bold;font-size:9.4px" fill="#000" textLength="13.2" lengthAdjust="spacingAndGlyphs">R9</text>
<text x="1001" y="568" style="font-family:'DejaVu Sans Condensed','DejaVu Sans','Liberation Sans',sans-serif;font-weight:bold;font-size:9.4px" fill="#000" textLength="13.2" lengthAdjust="spacingAndGlyphs">50</text>
</g>
</svg>
</body></html>
